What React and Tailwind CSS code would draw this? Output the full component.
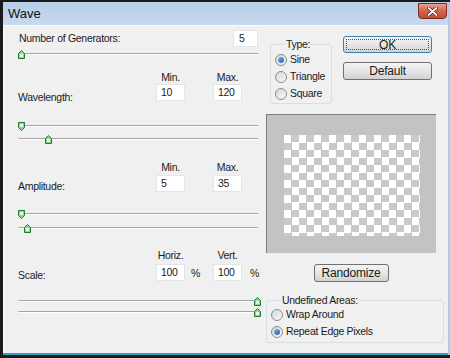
import React from 'react';

const font = { fontFamily: '"Liberation Sans", Arial, sans-serif' };

function Thumb({ down }) {
  return (
    <svg width="7" height="9" viewBox="0 0 7 9" className={down ? 'rotate-180' : ''}>
      <path d="M3.5 0.5 L6.5 3.5 L6.5 8.5 L0.5 8.5 L0.5 3.5 Z" fill="#8fd48f" stroke="#1f7a33" strokeWidth="1" />
      <rect x="2" y="4" width="3" height="3" fill="#e9f7e9" />
    </svg>
  );
}

// track + thumb, thumb sits over the track
function Slider({ at, down, className = '' }) {
  return (
    <div className={`relative h-[10px] ${className}`}>
      <div className="absolute left-0 right-0 top-[4px] h-[2px] border-t border-[#a4a4a4] bg-white rounded-l-full" />
      <div className="absolute top-[1px]" style={{ left: at }}>
        <Thumb down={down} />
      </div>
    </div>
  );
}

function Field({ value }) {
  return (
    <div className="h-[17px] w-[29px] bg-white border border-[#e2e6ea] pl-[4px] leading-[15px]">
      {value}
    </div>
  );
}

function Radio({ checked, label }) {
  return (
    <div className="flex items-center gap-[3px] h-[17px]">
      <span className="w-[12px] h-[12px] rounded-full border border-[#8c8c8c] bg-gradient-to-br from-[#d6d6d6] to-[#fafafa] flex items-center justify-center">
        {checked && <span className="w-[6px] h-[6px] rounded-full bg-gradient-to-br from-[#7ab8ec] to-[#1b5fa8]" />}
      </span>
      <span>{label}</span>
    </div>
  );
}

function Button({ children, focused, className = '' }) {
  return (
    <div
      className={`rounded-[3px] border ${focused ? 'border-[#3c7fb1]' : 'border-[#707070]'} bg-gradient-to-b from-[#f4f4f4] via-[#e6e6e6] to-[#d2d2d2] flex items-center justify-center text-[12px] tracking-[-0.2px] ${className}`}
    >
      {focused ? (
        <div className="m-[2px] self-stretch flex-1 flex items-center justify-center border border-dotted border-[#555]">{children}</div>
      ) : (
        children
      )}
    </div>
  );
}

function Section({ label, a, b, va, vb, pct, labelPad, gap }) {
  return (
    <>
      <div className="grid grid-cols-[138px_29px_28px_29px_1fr] h-[12px] leading-[12px]">
        <div />
        <div className="text-center">{a}</div>
        <div />
        <div className="text-center">{b}</div>
      </div>
      <div className="grid grid-cols-[138px_29px_28px_29px_1fr] items-start leading-[12px]" style={{ marginTop: gap }}>
        <div style={{ paddingTop: labelPad }}>{label}</div>
        <Field value={va} />
        <div className="pl-[6px] pt-[3px]">{pct ? '%' : ''}</div>
        <Field value={vb} />
        <div className="pl-[8px] pt-[3px]">{pct ? '%' : ''}</div>
      </div>
    </>
  );
}

export default function App() {
  return (
    <div className="w-[450px] h-[358px] bg-[#1b1b1b] pl-[3px] pt-[2px] overflow-hidden" style={font}>
      <div className="w-[447px] border-r-[2px] border-[#a9cbe4]">
        {/* title bar */}
        <div className="h-[23px] bg-gradient-to-b from-[#b7cee8] to-[#c6daef] flex items-start justify-between pl-[5px] pr-[1px]">
          <span className="text-[13px] leading-[23px] text-[#111]">Wave</span>
          <div className="mt-[1px] w-[29px] h-[16px] rounded-b-[4px] border border-[#7a2a1e] bg-gradient-to-b from-[#e7a292] via-[#d2634d] to-[#c44c34] flex items-center justify-center">
            <svg width="11" height="9" viewBox="0 0 11 9">
              <path d="M1.5 1 L9.5 8 M9.5 1 L1.5 8" stroke="#3a1a14" strokeWidth="3.2" strokeLinecap="round" />
              <path d="M1.5 1 L9.5 8 M9.5 1 L1.5 8" stroke="#ffffff" strokeWidth="1.8" strokeLinecap="round" />
            </svg>
          </div>
        </div>

        {/* body */}
        <div className="h-[328px] bg-[#f0f0f0] border-t border-l border-[#fbfbfb] flex text-[10.5px] tracking-[-0.3px] text-[#1b1b1b]">
          {/* left column */}
          <div className="w-[262px] pl-[14px] pr-[8px] flex flex-col">
            <div className="mt-[4px] h-[17px] flex items-center justify-between">
              <span className="pl-[1px]">Number of Generators:</span>
              <div className="h-[17px] w-[25px] bg-white border border-[#e2e6ea] pl-[5px] leading-[15px]">5</div>
            </div>
            <Slider at={0} className="mt-[2px]" />

            <div className="mt-[12px]">
              <Section label="Wavelength:" a="Min." b="Max." va="10" vb="120" labelPad={7} gap={1} />
            </div>
            <Slider at={0} down className="mt-[18px]" />
            <Slider at={27} className="mt-[3px]" />

            <div className="mt-[17px]">
              <Section label="Amplitude:" a="Min." b="Max." va="5" vb="35" labelPad={5} gap={2} />
            </div>
            <Slider at={0} down className="mt-[17px]" />
            <Slider at={6} className="mt-[4px]" />

            <div className="mt-[16px]">
              <Section label="Scale:" a="Horiz." b="Vert." va="100" vb="100" pct labelPad={5} gap={3} />
            </div>
            <Slider at={236} className="mt-[15px]" />
            <Slider at={236} className="mt-[1px]" />
          </div>

          {/* right column */}
          <div className="w-[180px] flex flex-col">
            <div className="flex items-start mt-[10px]">
              <fieldset className="ml-[4px] mt-[2px] w-[62px] h-[66px] border border-[#d5dfe5] rounded-[3px] pl-[4px]">
                <legend className="ml-[10px] px-[1px] leading-[12px]">Type:</legend>
                <div className="mt-[1px]">
                  <Radio checked label="Sine" />
                  <Radio label="Triangle" />
                  <Radio label="Square" />
                </div>
              </fieldset>
              <div className="ml-[11px] flex flex-col">
                <Button focused className="w-[89px] h-[17px]">OK</Button>
                <Button className="w-[89px] h-[18px] mt-[9px]">Default</Button>
              </div>
            </div>

            <div className="mt-[10px] w-[170px] h-[139px] bg-[#c3c3c3] border-l border-t border-[#7d7d7d] flex items-start justify-center pt-[20px]">
              <div className="w-[136px] h-[101px] bg-[conic-gradient(#c9c9c9_25%,#ffffff_0_50%,#c9c9c9_0_75%,#ffffff_0)] bg-[length:15px_15px]" />
            </div>

            <div className="w-[170px] flex justify-center mt-[11px]">
              <Button className="w-[75px] h-[18px]">Randomize</Button>
            </div>

            <fieldset className="mt-[12px] w-[178px] h-[49px] border border-[#d5dfe5] rounded-[3px] pl-[4px]">
              <legend className="ml-[10px] px-[1px] leading-[12px]">Undefined Areas:</legend>
              <Radio label="Wrap Around" />
              <Radio checked label="Repeat Edge Pixels" />
            </fieldset>
          </div>
        </div>
        <div className="h-[2px] bg-[#2aa3c4]" />
      </div>
    </div>
  );
}
